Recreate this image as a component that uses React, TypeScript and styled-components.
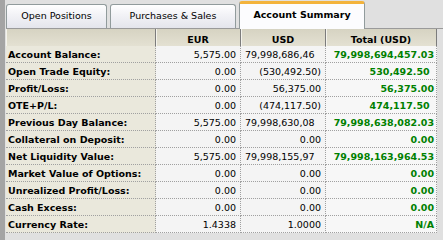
import { Fragment } from "react";
import styled, { createGlobalStyle } from "styled-components";

const GlobalStyle = createGlobalStyle`
  html, body {
    margin: 0;
    padding: 0;
    background: #e0e0e0;
  }
  body {
    font-family: "DejaVu Sans", Verdana, sans-serif;
    font-size: 9.5px;
    color: #000;
  }
`;

const Window = styled.div`
  width: 443px;
  height: 240px;
  box-sizing: border-box;
  display: flex;
  flex-direction: column;
  background: #e0e0e0;
  border-left: 5px solid #a4a4a4;
  padding-left: 1px;
  overflow: hidden;
`;

const TabStrip = styled.div`
  display: flex;
  align-items: flex-end;
  gap: 3px;
  height: 29px;
  box-sizing: border-box;
  border-bottom: 1px solid #9a9a9a;
`;

const Tab = styled.div<{ $active?: boolean; $width: number }>`
  width: ${(p) => p.$width}px;
  height: ${(p) => (p.$active ? 28 : 24)}px;
  box-sizing: border-box;
  display: flex;
  align-items: center;
  justify-content: center;
  margin-bottom: ${(p) => (p.$active ? -1 : 0)}px;
  padding-bottom: ${(p) => (p.$active ? 4 : 2)}px;
  border: 1px solid #919b9c;
  border-bottom: none;
  border-top: ${(p) => (p.$active ? "3px solid #f3b33c" : "1px solid #919b9c")};
  border-radius: 3px 3px 0 0;
  font-weight: ${(p) => (p.$active ? "bold" : "normal")};
  background: ${(p) =>
    p.$active
      ? "#fcfcfe"
      : "linear-gradient(#ffffff, #f3f3f7 40%, #e4e5ec)"};
`;

const Grid = styled.div`
  display: grid;
  grid-template-columns: 150px 85px 85px 111px;
  grid-auto-rows: 17px;
  width: 431px;
  background: #f4f4f4;
`;

const HeadCell = styled.div`
  box-sizing: border-box;
  height: 21px;
  display: flex;
  align-items: center;
  justify-content: center;
  font-weight: bold;
  background: linear-gradient(#d6d3c2, #e6e3d5);
  border-right: 1px solid #7c7c7c;
  box-shadow: inset 1px 0 0 #f4f3ec;
  border-bottom: 1px solid #c8c5b4;
`;

const Label = styled.div`
  box-sizing: border-box;
  display: flex;
  align-items: center;
  padding-left: 2px;
  font-weight: bold;
  white-space: nowrap;
  background: #eae8dc;
  border-right: 1px dotted #a0a0a0;
  border-bottom: 1px dotted #a0a0a0;
`;

const Value = styled.div<{ $total?: boolean; $clipped?: boolean }>`
  box-sizing: border-box;
  display: flex;
  align-items: center;
  justify-content: ${(p) => (p.$clipped ? "flex-start" : "flex-end")};
  overflow: hidden;
  white-space: nowrap;
  padding: 0 ${(p) => (p.$total ? 2 : p.$clipped ? 0 : 4)}px 0 4px;
  color: ${(p) => (p.$total ? "#008000" : "#000")};
  font-weight: ${(p) => (p.$total ? "bold" : "normal")};
  background: ${(p) => (p.$total ? "#f7f7f7" : "#f4f4f4")};
  border-right: 1px dotted #a0a0a0;
  border-bottom: 1px dotted #a0a0a0;
`;

const ParenPad = styled.span`
  visibility: hidden;
`;

type Row = {
  label: string;
  eur: string;
  usd: string;
  total: string;
  pad?: boolean;
  clipped?: boolean;
};

// USD column is too narrow for the big balances; the grid shows only the leading digits
const rows: Row[] = [
  { label: "Account Balance:", eur: "5,575.00", usd: "79,998,686,46", total: "79,998,694,457.03", clipped: true },
  { label: "Open Trade Equity:", eur: "0.00", usd: "(530,492.50)", total: "530,492.50", pad: true },
  { label: "Profit/Loss:", eur: "0.00", usd: "56,375.00", total: "56,375.00" },
  { label: "OTE+P/L:", eur: "0.00", usd: "(474,117.50)", total: "474,117.50", pad: true },
  { label: "Previous Day Balance:", eur: "5,575.00", usd: "79,998,630,08", total: "79,998,638,082.03", clipped: true },
  { label: "Collateral on Deposit:", eur: "0.00", usd: "0.00", total: "0.00" },
  { label: "Net Liquidity Value:", eur: "5,575.00", usd: "79,998,155,97", total: "79,998,163,964.53", clipped: true },
  { label: "Market Value of Options:", eur: "0.00", usd: "0.00", total: "0.00" },
  { label: "Unrealized Profit/Loss:", eur: "0.00", usd: "0.00", total: "0.00" },
  { label: "Cash Excess:", eur: "0.00", usd: "0.00", total: "0.00" },
  { label: "Currency Rate:", eur: "1.4338", usd: "1.0000", total: "N/A" },
];

export default function App() {
  return (
    <>
      <GlobalStyle />
      <Window>
        <TabStrip>
          <Tab $width={101}>Open Positions</Tab>
          <Tab $width={126}>Purchases &amp; Sales</Tab>
          <Tab $width={126} $active>
            Account Summary
          </Tab>
        </TabStrip>
        <Grid>
          <HeadCell />
          <HeadCell>EUR</HeadCell>
          <HeadCell>USD</HeadCell>
          <HeadCell>Total (USD)</HeadCell>
          {rows.map((r) => (
            <Fragment key={r.label}>
              <Label>{r.label}</Label>
              <Value>{r.eur}</Value>
              <Value $clipped={r.clipped}>{r.usd}</Value>
              <Value $total>
                {r.total}
                {r.pad && <ParenPad>)</ParenPad>}
              </Value>
            </Fragment>
          ))}
        </Grid>
      </Window>
    </>
  );
}
